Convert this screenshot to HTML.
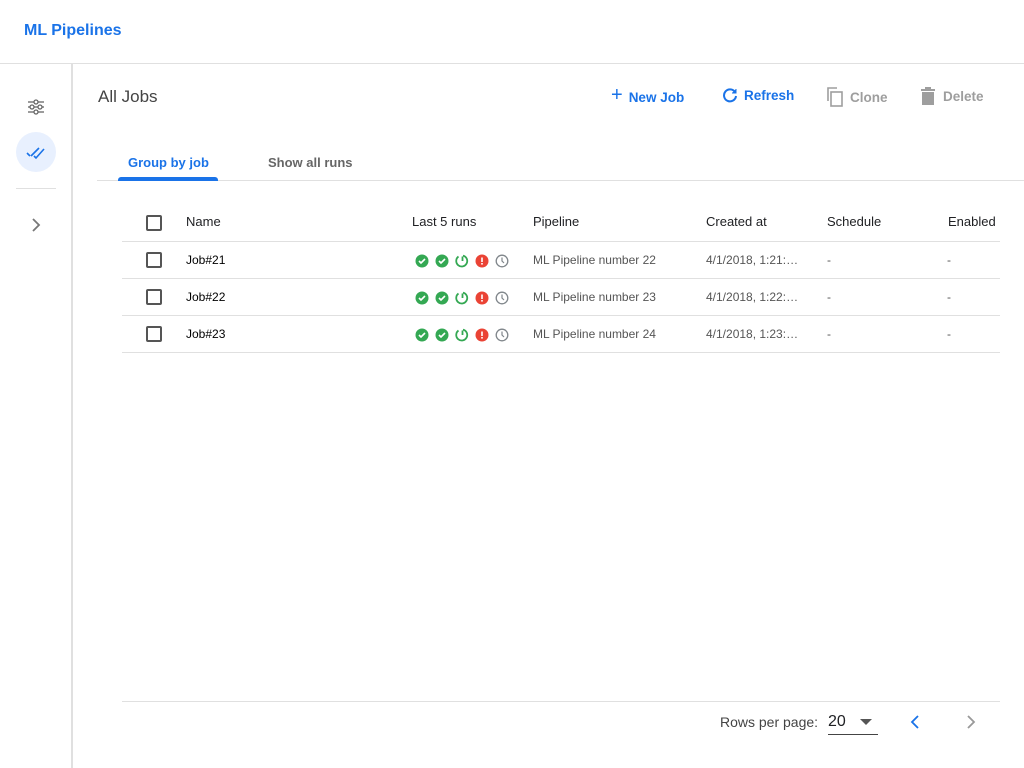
<!DOCTYPE html>
<html><head><meta charset="utf-8"><style>
*{box-sizing:border-box;margin:0;padding:0}
body{width:1024px;height:768px;overflow:hidden;background:#fff;font-family:"Liberation Sans",sans-serif;position:relative;color:#202124}
.a{position:absolute}
.top{left:0;top:0;width:1024px;height:64px;border-bottom:1px solid #e0e0e0}
.logo{left:24px;top:22px;font-size:16px;font-weight:bold;color:#1a73e8}
.side{left:0;top:64px;width:73px;height:704px;border-right:2px solid #e0e0e0}
.btn{top:87px;font-size:13.5px;font-weight:bold;display:flex;align-items:center;gap:6px}
.cb{width:16px;height:16px;border:2px solid #555;border-radius:2px}
.h{top:214px;font-size:13px;color:#202124}
.c{font-size:12px;color:#555}
.line{left:122px;width:878px;height:1px;background:#e0e0e0}
</style></head><body>
<div class="a top"></div>
<div class="a logo">ML Pipelines</div>
<div class="a side"></div>
<svg class="a" style="left:27px;top:98px" width="18" height="18" viewBox="0 0 18 18" fill="none" stroke="#666" stroke-width="1.3"><line x1="1" y1="4" x2="17" y2="4"/><line x1="1" y1="9" x2="17" y2="9"/><line x1="1" y1="14" x2="17" y2="14"/><circle cx="9" cy="4" r="2" fill="#fff"/><circle cx="5" cy="9" r="2" fill="#fff"/><circle cx="13" cy="9" r="2" fill="#fff"/><circle cx="9" cy="14" r="2" fill="#fff"/></svg>
<div class="a" style="left:16px;top:132px;width:40px;height:40px;border-radius:50%;background:#e8f0fe"></div>
<svg class="a" style="left:26px;top:142px" width="20" height="20" viewBox="0 0 20 20" fill="none" stroke="#1a73e8" stroke-width="1.6"><path d="M1 11l3 3M5 14l8-8M8 14l2 2 8-9"/></svg>
<div class="a" style="left:16px;top:188px;width:40px;height:1px;background:#e0e0e0"></div>
<svg class="a" style="left:30px;top:218px" width="12" height="14" viewBox="0 0 12 14" fill="none" stroke="#777" stroke-width="1.8"><path d="M3 1l6 6-6 6"/></svg>
<div class="a" style="left:98px;top:87px;font-size:17px;color:#444">All Jobs</div>
<div class="a btn" style="left:611px;color:#1a73e8"><span style="font-size:20px;font-weight:normal;margin-top:-3px">+</span>New Job</div>
<div class="a btn" style="left:722px;color:#1a73e8"><svg width="16" height="16" viewBox="0 0 16 16" fill="none" stroke="#1a73e8" stroke-width="2"><path d="M13 5A6 6 0 1 0 14 9"/><path d="M14 2v4h-4" fill="#1a73e8" stroke-width="1"/></svg>Refresh</div>
<div class="a btn" style="left:826px;color:#9e9e9e"><svg width="18" height="20" viewBox="0 0 18 20" fill="none" stroke="#9e9e9e" stroke-width="1.6"><path d="M11 1H2v13"/><rect x="5" y="5" width="11" height="14"/></svg>Clone</div>
<div class="a btn" style="left:921px;color:#9e9e9e;gap:8px"><svg width="14" height="18" viewBox="0 0 14 18" fill="#9e9e9e"><rect x="0" y="2" width="14" height="2"/><rect x="4" y="0" width="6" height="2"/><rect x="1" y="5" width="12" height="13"/></svg>Delete</div>
<div class="a" style="left:128px;top:155px;font-size:13px;font-weight:bold;color:#1a73e8">Group by job</div>
<div class="a" style="left:268px;top:155px;font-size:13px;font-weight:bold;color:#666">Show all runs</div>
<div class="a" style="left:97px;top:180px;width:927px;height:1px;background:#e0e0e0"></div>
<div class="a" style="left:118px;top:177px;width:100px;height:4px;background:#1a73e8;border-radius:3px 3px 0 0"></div>
<div class="a cb" style="left:146px;top:215px"></div>
<div class="a h" style="left:186px">Name</div>
<div class="a h" style="left:412px">Last 5 runs</div>
<div class="a h" style="left:533px">Pipeline</div>
<div class="a h" style="left:706px">Created at</div>
<div class="a h" style="left:827px">Schedule</div>
<div class="a h" style="left:948px">Enabled</div>
<div class="a line" style="top:241px"></div>
<div class="a line" style="top:278px"></div>
<div class="a line" style="top:315px"></div>
<div class="a line" style="top:352px"></div>
<div class="a line" style="top:701px"></div>

<div class="a cb" style="left:146px;top:252px"></div>
<div class="a c" style="left:186px;top:253px;color:#000">Job#21</div>
<div class="a c" style="left:533px;top:253px">ML Pipeline number 22</div>
<div class="a c" style="left:706px;top:253px">4/1/2018, 1:21:…</div>
<div class="a c" style="left:827px;top:253px">-</div><div class="a c" style="left:947px;top:253px">-</div>
<div class="a cb" style="left:146px;top:289px"></div>
<div class="a c" style="left:186px;top:290px;color:#000">Job#22</div>
<div class="a c" style="left:533px;top:290px">ML Pipeline number 23</div>
<div class="a c" style="left:706px;top:290px">4/1/2018, 1:22:…</div>
<div class="a c" style="left:827px;top:290px">-</div><div class="a c" style="left:947px;top:290px">-</div>
<div class="a cb" style="left:146px;top:326px"></div>
<div class="a c" style="left:186px;top:327px;color:#000">Job#23</div>
<div class="a c" style="left:533px;top:327px">ML Pipeline number 24</div>
<div class="a c" style="left:706px;top:327px">4/1/2018, 1:23:…</div>
<div class="a c" style="left:827px;top:327px">-</div><div class="a c" style="left:947px;top:327px">-</div>

<svg width="0" height="0" style="position:absolute"><defs>
<g id="runs">
<circle cx="7" cy="7" r="6.5" fill="#34a853"/><path d="M4 7l2 2 4-4" stroke="#fff" stroke-width="1.6" fill="none"/>
<circle cx="27" cy="7" r="6.5" fill="#34a853"/><path d="M24 7l2 2 4-4" stroke="#fff" stroke-width="1.6" fill="none"/>
<path d="M43.5 2.5A5.5 5.5 0 1 0 48 1.6" stroke="#34a853" stroke-width="1.8" fill="none"/><path d="M47.5 2.5v4.5" stroke="#34a853" stroke-width="1.8"/>
<circle cx="67" cy="7" r="6.5" fill="#ea4335"/><rect x="66.2" y="3.5" width="1.6" height="4.5" fill="#fff"/><rect x="66.2" y="9" width="1.6" height="1.6" fill="#fff"/>
<circle cx="87" cy="7" r="5.8" fill="none" stroke="#80868b" stroke-width="1.3"/><path d="M87 3.5V7l2 2" stroke="#80868b" stroke-width="1.2" fill="none"/>
</g></defs></svg>
<svg class="a" style="left:415px;top:254px" width="96" height="14"><use href="#runs"/></svg>
<svg class="a" style="left:415px;top:291px" width="96" height="14"><use href="#runs"/></svg>
<svg class="a" style="left:415px;top:328px" width="96" height="14"><use href="#runs"/></svg>

<div class="a" style="left:720px;top:714px;font-size:14px;color:#444">Rows per page:</div>
<div class="a" style="left:828px;top:713px;font-size:16px;color:#202124">20</div>
<svg class="a" style="left:860px;top:719px" width="12" height="6"><path d="M0 0h12L6 6z" fill="#555"/></svg>
<div class="a" style="left:828px;top:734px;width:50px;height:1px;background:#444"></div>
<svg class="a" style="left:910px;top:715px" width="10" height="14" fill="none" stroke="#1a73e8" stroke-width="1.8"><path d="M8 1L2 7l6 6"/></svg>
<svg class="a" style="left:966px;top:715px" width="10" height="14" fill="none" stroke="#999" stroke-width="1.8"><path d="M2 1l6 6-6 6"/></svg>
</body></html>
